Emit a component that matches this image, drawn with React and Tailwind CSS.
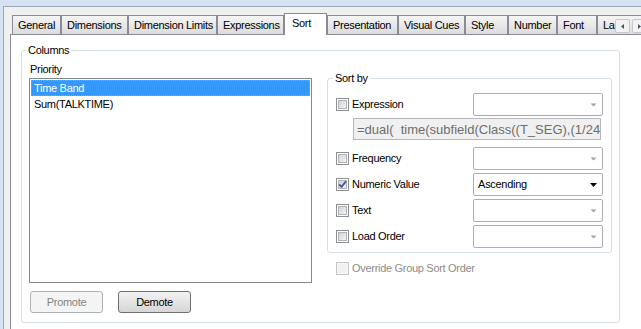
import React from 'react'

const tabs = [
    { label: 'General', w: 'w-[49px]' },
    { label: 'Dimensions', w: 'w-[67px]' },
    { label: 'Dimension Limits', w: 'w-[89px]' },
    { label: 'Expressions', w: 'w-[67px]' },
    { label: 'Sort', w: 'w-[43px]', active: true },
    { label: 'Presentation', w: 'w-[71px]' },
    { label: 'Visual Cues', w: 'w-[67px]' },
    { label: 'Style', w: 'w-[43px]' },
    { label: 'Number', w: 'w-[49px]' },
    { label: 'Font', w: 'w-[40px]' },
    { label: 'La', w: 'w-[60px]' },
]

const Check = ({ checked, disabled }) => (
    <span className={`flex h-[13px] w-[13px] shrink-0 items-center justify-center border ${disabled ? 'border-[#c6c6c6] bg-[#f7f7f7]' : 'border-[#8e8f8f] bg-white'}`}>
        <span className={`flex h-[9px] w-[9px] items-center justify-center ${disabled ? 'bg-[#f1f1f1]' : 'border border-[#b0b3b8] bg-linear-to-br from-[#d0d3d8] to-[#f4f4f5]'}`}>
            {checked && (
                <svg width="9" height="9" viewBox="0 0 9 9" className="-m-px">
                    <path d="M1.2 4.4 L3.6 6.9 L7.9 1.4" fill="none" stroke="#44599a" strokeWidth="1.9" />
                </svg>
            )}
        </span>
    </span>
)

const Combo = ({ value }) => (
    <div className="ml-auto flex h-[23px] w-[130px] items-center rounded-[2px] border border-[#abadb3] bg-white pl-[4px] pr-[5px]">
        <span className="flex-1">{value}</span>
        {value ? (
            <svg width="7" height="4" viewBox="0 0 7 4"><path d="M0 0H7L3.5 4Z" fill="#000" /></svg>
        ) : (
            <svg width="7" height="4" viewBox="0 0 7 4"><path d="M0.5 0.5H6.5L3.5 3.5Z" fill="#a2a2a2" /></svg>
        )}
    </div>
)

const SortRow = ({ label, checked, value }) => (
    <div className="flex h-[23px] items-center">
        <Check checked={checked} />
        <span className="ml-[3px]">{label}</span>
        <Combo value={value} />
    </div>
)

const App = () => {
    return (
        <div className="h-[329px] w-[641px] overflow-hidden bg-[#d5e2f2] pl-[3px] pt-[6px] font-['Liberation_Sans',Arial,sans-serif] text-[11px] leading-[13px] tracking-[-0.3px] text-black">
            <div className="h-full border-l border-t border-[#9aa7b8] bg-[#f0f0f0] pl-[6px] pt-[6px]">
                <div className="relative flex h-[21px] items-end pl-[2px]">
                    {tabs.map((t) =>
                        t.active ? (
                            <div key={t.label} className={`relative z-10 -mb-px flex h-[22px] shrink-0 items-center border border-b-0 border-[#898c95] bg-white pb-[3px] pl-[7px] ${t.w}`}>
                                {t.label}
                            </div>
                        ) : (
                            <div key={t.label} className={`flex h-[19px] shrink-0 items-center whitespace-nowrap border border-b-0 border-[#898c95] bg-linear-to-b from-[#f5f5f5] to-[#dcdcdc] pl-[5px] ${t.w}`}>
                                {t.label}
                            </div>
                        )
                    )}
                    <div className="absolute left-[605px] top-[6px] z-20 flex gap-[2px]">
                        <div className="flex h-[14px] w-[15px] items-center justify-center rounded-[2px] border border-[#c4c7cc] bg-[#f2f2f2]">
                            <svg width="3" height="5" viewBox="0 0 3 5"><path d="M3 0V5L0 2.5Z" fill="#44546f" /></svg>
                        </div>
                        <div className="flex h-[14px] w-[15px] items-center justify-center rounded-[2px] border border-[#c4c7cc] bg-[#f2f2f2]">
                            <svg width="3" height="5" viewBox="0 0 3 5"><path d="M0 0V5L3 2.5Z" fill="#44546f" /></svg>
                        </div>
                    </div>
                </div>
                <div className="h-full border-l border-t border-[#898c95] bg-white pl-[10px]">
                    <fieldset className="mt-[9px] w-[599px] rounded-[3px] border border-[#d5dfe5] pb-[9px] pl-[7px] pr-[8px]">
                        <legend className="ml-[-3px] px-[2px]">Columns</legend>
                        <div className="flex items-start gap-[15px]">
                            <div className="mt-[6px] flex w-[283px] flex-col">
                                <p className="pl-[1px]">Priority</p>
                                <div className="mt-[2px] h-[205px] border border-[#828790] bg-white px-[1px] pt-[1px]">
                                    <div className="h-[16px] border border-dotted border-[#d9924a] bg-[#3399ff] pl-[2px] leading-[14px] text-white">Time Band</div>
                                    <div className="h-[16px] pl-[3px] leading-[16px]">Sum(TALKTIME)</div>
                                </div>
                                <div className="mt-[8px] flex gap-[15px] pl-[1px]">
                                    <button className="h-[22px] w-[73px] rounded-[3px] border border-[#adb2b5] bg-[#f4f4f4] text-[#838383]">Promote</button>
                                    <button className="h-[22px] w-[73px] rounded-[3px] border border-[#707070] bg-linear-to-b from-[#f2f2f2] to-[#d6d6d6] text-black">Demote</button>
                                </div>
                            </div>
                            <div className="mt-[15px] flex w-[284px] flex-col">
                                <fieldset className="rounded-[3px] border border-[#d5dfe5] px-[8px] pb-[4px] pt-[8px]">
                                    <legend className="ml-[-3px] px-[2px]">Sort by</legend>
                                    <SortRow label="Expression" />
                                    <div className="ml-[17px] mr-[2px] mt-[2px] flex h-[22px] items-center overflow-hidden whitespace-pre border border-[#b5b7bd] bg-[#f0f0f0] pl-[3px] text-[13px] tracking-normal text-[#6d6d6d]">
                                        =dual(  time(subfield(Class((T_SEG),(1/24
                                    </div>
                                    <div className="mt-[7px] flex flex-col gap-[3px]">
                                        <SortRow label="Frequency" />
                                        <SortRow label="Numeric Value" checked value="Ascending" />
                                        <SortRow label="Text" />
                                        <SortRow label="Load Order" />
                                    </div>
                                </fieldset>
                                <div className="mt-[9px] flex items-center pl-[9px] text-[#8d8d8d]">
                                    <Check disabled />
                                    <span className="ml-[3px]">Override Group Sort Order</span>
                                </div>
                            </div>
                        </div>
                    </fieldset>
                </div>
            </div>
        </div>
    )
}

export default App
